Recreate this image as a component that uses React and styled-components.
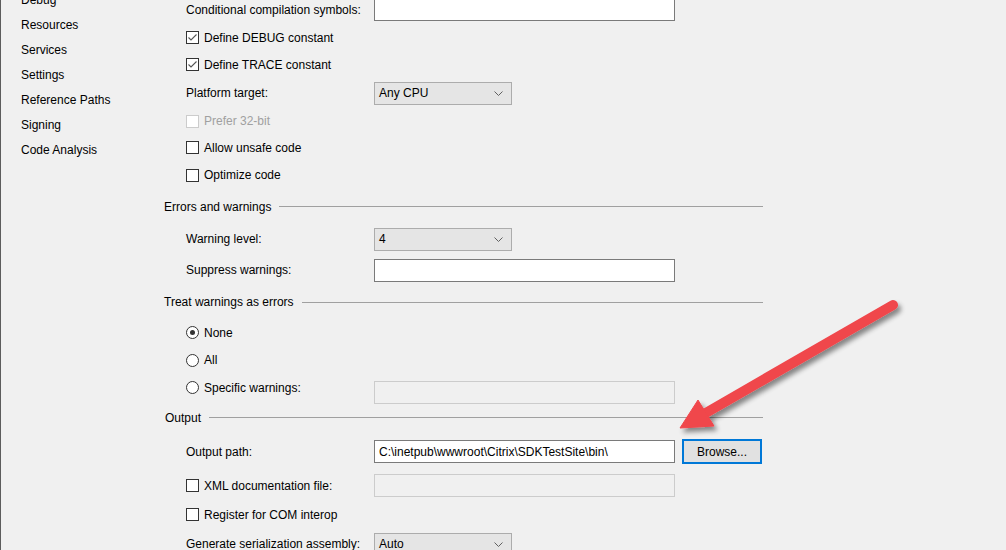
import React from 'react';
import styled, { createGlobalStyle } from 'styled-components';

const GlobalStyle = createGlobalStyle`
  html, body {
    margin: 0;
    padding: 0;
    background: #f0f0f0;
  }
  body {
    font-family: "Liberation Sans", Arial, sans-serif;
    font-size: 12px;
    color: #000;
  }
`;

const Page = styled.div`
  position: relative;
  width: 1006px;
  height: 550px;
  overflow: hidden;
  display: flex;
  background: #f0f0f0;
`;

const Sidebar = styled.ul`
  width: 143px;
  margin: -12px 0 0 0;
  padding: 0 0 0 20px;
  list-style: none;
  border-left: 1px solid #5c5c5c;
  flex-shrink: 0;
`;

const NavItem = styled.li`
  height: 25px;
  line-height: 25px;
  white-space: nowrap;
`;

const Main = styled.div`
  display: flex;
  flex-direction: column;
  margin-top: -5px;
  width: 599px;
`;

const Row = styled.div`
  display: flex;
  align-items: center;
  height: ${({ $h }) => $h}px;
  padding-left: 22px;
  flex-shrink: 0;
`;

const SectionHeader = styled.div`
  display: flex;
  align-items: center;
  gap: 8px;
  height: ${({ $h }) => $h}px;
  padding-left: ${({ $indent }) => $indent || 0}px;
  white-space: nowrap;
  flex-shrink: 0;

  &::after {
    content: '';
    flex: 1;
    height: 1px;
    background: #a0a0a0;
  }
`;

const Label = styled.div`
  width: 188px;
  display: flex;
  align-items: center;
  gap: 5px;
  white-space: nowrap;
  flex-shrink: 0;
  color: ${({ $disabled }) => ($disabled ? '#a0a0a0' : '#000')};
`;

const TextBox = styled.div`
  box-sizing: border-box;
  width: 301px;
  height: 23px;
  padding: 0 4px;
  display: flex;
  align-items: center;
  background: ${({ $disabled }) => ($disabled ? '#f0f0f0' : '#fff')};
  border: 1px solid ${({ $disabled }) => ($disabled ? '#cccccc' : '#7a7a7a')};
  margin-top: ${({ $offset }) => $offset || 0}px;
  white-space: nowrap;
`;

const Select = styled.div`
  box-sizing: border-box;
  width: 138px;
  height: 23px;
  padding: 0 8px 0 4px;
  display: flex;
  align-items: center;
  justify-content: space-between;
  background: #e5e5e5;
  border: 1px solid #acacac;
`;

const Box = styled.span`
  box-sizing: border-box;
  width: 13px;
  height: 13px;
  display: inline-flex;
  align-items: center;
  justify-content: center;
  background: #fff;
  border: 1px solid ${({ $disabled }) => ($disabled ? '#cccccc' : '#333')};
  flex-shrink: 0;
`;

const Radio = styled.span`
  box-sizing: border-box;
  width: 13px;
  height: 13px;
  border-radius: 50%;
  display: inline-flex;
  align-items: center;
  justify-content: center;
  background: #fff;
  border: 1px solid #333;
  flex-shrink: 0;

  &::after {
    content: '';
    width: 5px;
    height: 5px;
    border-radius: 50%;
    background: ${({ $checked }) => ($checked ? '#333' : 'transparent')};
  }
`;

const Button = styled.div`
  box-sizing: border-box;
  margin-left: 7px;
  width: 80px;
  height: 25px;
  display: flex;
  align-items: center;
  justify-content: center;
  background: #e1e1e1;
  border: 2px solid #0078d7;
`;

const Overlay = styled.svg`
  position: absolute;
  left: 0;
  top: 0;
  pointer-events: none;
`;

const Chevron = () => (
  <svg width="9" height="5" viewBox="0 0 9 5">
    <polyline points="0.5,0.5 4.5,4.5 8.5,0.5" fill="none" stroke="#606060" strokeWidth="1" />
  </svg>
);

const Check = ({ checked, disabled }) => (
  <Box $disabled={disabled}>
    {checked && (
      <svg width="11" height="11" viewBox="0 0 11 11">
        <polyline points="1.5,5.5 4,8 9.5,2.5" fill="none" stroke="#555" strokeWidth="1.1" />
      </svg>
    )}
  </Box>
);

const CheckRow = ({ h, checked, disabled, children }) => (
  <Row $h={h}>
    <Label $disabled={disabled}>
      <Check checked={checked} disabled={disabled} />
      {children}
    </Label>
  </Row>
);

const navItems = ['Debug', 'Resources', 'Services', 'Settings', 'Reference Paths', 'Signing', 'Code Analysis'];

const App = () => {
  return (
    <Page>
      <GlobalStyle />
      <Sidebar>
        {navItems.map((item) => (
          <NavItem key={item}>{item}</NavItem>
        ))}
      </Sidebar>

      <Main>
        <Row $h={29}>
          <Label>Conditional compilation symbols:</Label>
          <TextBox />
        </Row>
        <CheckRow h={27} checked>Define DEBUG constant</CheckRow>
        <CheckRow h={27} checked>Define TRACE constant</CheckRow>
        <Row $h={30}>
          <Label>Platform target:</Label>
          <Select>Any CPU<Chevron /></Select>
        </Row>
        <CheckRow h={26} disabled>Prefer 32-bit</CheckRow>
        <CheckRow h={27}>Allow unsafe code</CheckRow>
        <CheckRow h={28}>Optimize code</CheckRow>

        <SectionHeader $h={35}>Errors and warnings</SectionHeader>
        <Row $h={30}>
          <Label>Warning level:</Label>
          <Select>4<Chevron /></Select>
        </Row>
        <Row $h={32}>
          <Label>Suppress warnings:</Label>
          <TextBox />
        </Row>

        <SectionHeader $h={32}>Treat warnings as errors</SectionHeader>
        <Row $h={29}>
          <Label><Radio $checked />None</Label>
        </Row>
        <Row $h={26}>
          <Label><Radio />All</Label>
        </Row>
        <Row $h={29}>
          <Label><Radio />Specific warnings:</Label>
          <TextBox $disabled $offset={9} />
        </Row>

        <SectionHeader $h={31} $indent={1}>Output</SectionHeader>
        <Row $h={37}>
          <Label>Output path:</Label>
          <TextBox>C:\inetpub\wwwroot\Citrix\SDKTestSite\bin\</TextBox>
          <Button>Browse...</Button>
        </Row>
        <Row $h={31}>
          <Label><Check />XML documentation file:</Label>
          <TextBox $disabled />
        </Row>
        <CheckRow h={27}>Register for COM interop</CheckRow>
        <Row $h={32}>
          <Label>Generate serialization assembly:</Label>
          <Select>Auto<Chevron /></Select>
        </Row>
      </Main>

      <Overlay width="1006" height="550" viewBox="0 0 1006 550">
        <defs>
          <filter id="arrowShadow" x="-20%" y="-20%" width="140%" height="140%">
            <feGaussianBlur in="SourceAlpha" stdDeviation="2.5" />
            <feOffset dx="3" dy="4" result="blur" />
            <feComponentTransfer>
              <feFuncA type="linear" slope="0.45" />
            </feComponentTransfer>
            <feMerge>
              <feMergeNode />
              <feMergeNode in="SourceGraphic" />
            </feMerge>
          </filter>
        </defs>
        <g filter="url(#arrowShadow)" fill="#f0464b" stroke="#f0464b">
          <line x1="893" y1="305" x2="704" y2="414" strokeWidth="10" strokeLinecap="round" />
          <polygon points="680,428 698,400 714,426" strokeWidth="1" strokeLinejoin="round" />
        </g>
      </Overlay>
    </Page>
  );
};

export default App;
